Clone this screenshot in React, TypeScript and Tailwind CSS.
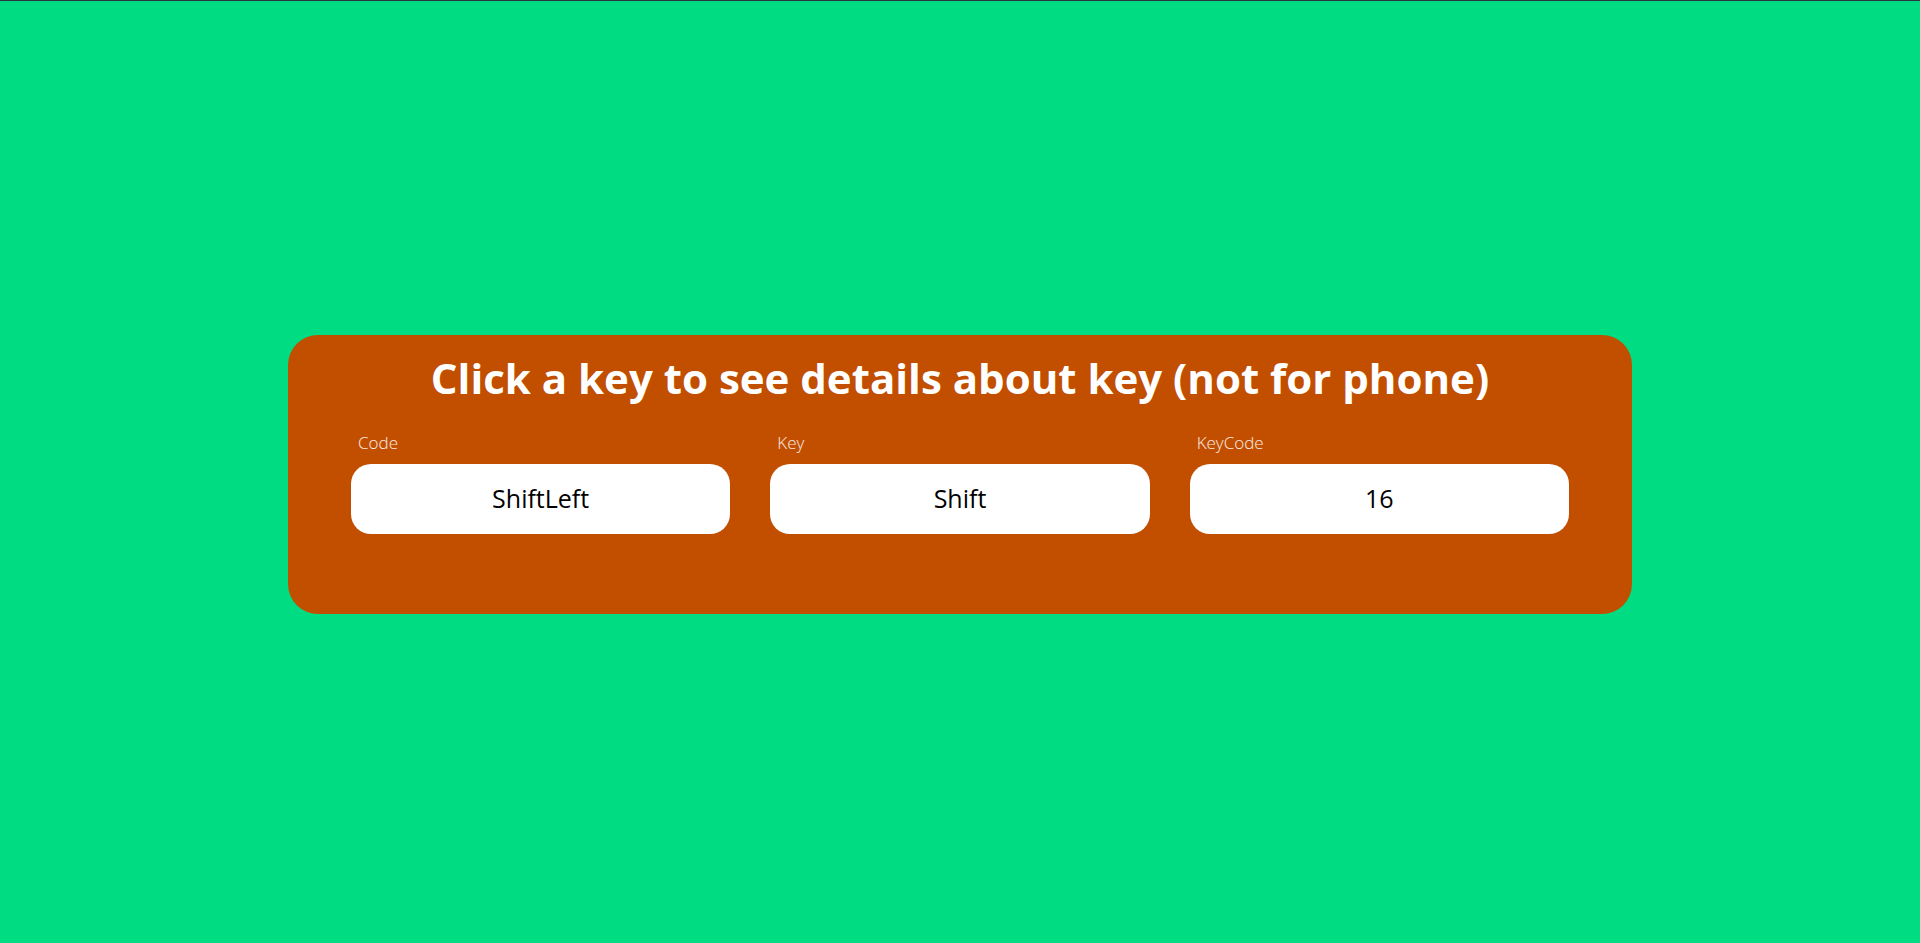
import React, { useEffect, useState } from 'react';

interface KeyInfo {
  code: string;
  key: string;
  keyCode: number;
}

const FIELDS: { label: string; field: keyof KeyInfo }[] = [
  { label: 'Code', field: 'code' },
  { label: 'Key', field: 'key' },
  { label: 'KeyCode', field: 'keyCode' },
];

const App: React.FC = () => {
  const [info, setInfo] = useState<KeyInfo>({ code: 'ShiftLeft', key: 'Shift', keyCode: 16 });

  useEffect(() => {
    const onKey = (e: KeyboardEvent) => {
      setInfo({ code: e.code, key: e.key, keyCode: e.keyCode });
    };
    window.addEventListener('keydown', onKey);
    return () => window.removeEventListener('keydown', onKey);
  }, []);

  return (
    <div className="min-h-screen bg-[#00dc82] border-t border-[#2d3240] flex items-center justify-center font-['Open_Sans',sans-serif]">
      <div className="w-[70%] bg-[#c24e00] rounded-[30px] pt-[18px] pb-[80px] mt-[5px]">
        <h1 className="text-center text-white font-bold text-[42px] leading-[1.2]">
          Click a key to see details about key (not for phone)
        </h1>
        <div className="grid grid-cols-3 gap-[40px] px-[63px] mt-[26px]">
          {FIELDS.map(({ label, field }) => (
            <div key={field} className="flex flex-col">
              <label className="text-white/90 font-light text-[17px] leading-[26px] pl-[7px] mb-[8px]">
                {label}
              </label>
              <div className="h-[70px] bg-white rounded-[20px] flex items-center justify-center text-black text-[25px]">
                {info[field]}
              </div>
            </div>
          ))}
        </div>
      </div>
    </div>
  );
};

export default App;
